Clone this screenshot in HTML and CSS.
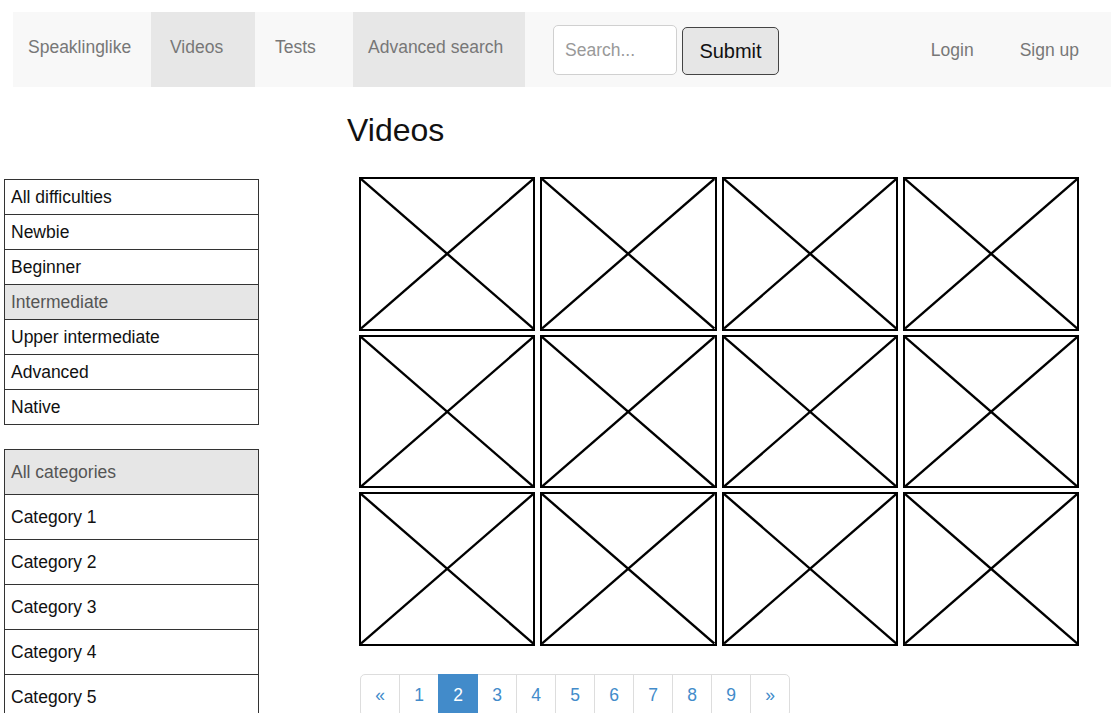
FILE: index.html
```html
<!DOCTYPE html>
<html lang="en">
<head>
<meta charset="utf-8">
<title>Videos - Speaklinglike</title>
<link rel="stylesheet" href="styles.css">
</head>
<body>
<nav class="navbar">
  <a class="nav-item brand" href="#">Speaklinglike</a>
  <a class="nav-item videos active" href="#">Videos</a>
  <a class="nav-item tests" href="#">Tests</a>
  <a class="nav-item advanced active" href="#">Advanced search</a>
  <form class="search-form">
    <input class="search-input" type="text" placeholder="Search...">
    <button class="search-btn" type="button">Submit</button>
  </form>
  <div class="nav-right">
    <a class="nav-item account" href="#">Login</a>
    <a class="nav-item account" href="#">Sign up</a>
  </div>
</nav>

<div class="layout">
  <aside class="sidebar">
    <ul class="filter-list difficulty">
      <li>All difficulties</li>
      <li>Newbie</li>
      <li>Beginner</li>
      <li class="selected">Intermediate</li>
      <li>Upper intermediate</li>
      <li>Advanced</li>
      <li>Native</li>
    </ul>
    <ul class="filter-list categories">
      <li class="selected">All categories</li>
      <li>Category 1</li>
      <li>Category 2</li>
      <li>Category 3</li>
      <li>Category 4</li>
      <li>Category 5</li>
    </ul>
  </aside>

  <main class="main">
    <h1 class="page-title">Videos</h1>
    <div class="video-grid">
      <div class="thumb"><svg viewBox="0 0 100 100" preserveAspectRatio="none"><line x1="0" y1="0" x2="100" y2="100"/><line x1="100" y1="0" x2="0" y2="100"/></svg></div>
      <div class="thumb"><svg viewBox="0 0 100 100" preserveAspectRatio="none"><line x1="0" y1="0" x2="100" y2="100"/><line x1="100" y1="0" x2="0" y2="100"/></svg></div>
      <div class="thumb"><svg viewBox="0 0 100 100" preserveAspectRatio="none"><line x1="0" y1="0" x2="100" y2="100"/><line x1="100" y1="0" x2="0" y2="100"/></svg></div>
      <div class="thumb"><svg viewBox="0 0 100 100" preserveAspectRatio="none"><line x1="0" y1="0" x2="100" y2="100"/><line x1="100" y1="0" x2="0" y2="100"/></svg></div>
      <div class="thumb"><svg viewBox="0 0 100 100" preserveAspectRatio="none"><line x1="0" y1="0" x2="100" y2="100"/><line x1="100" y1="0" x2="0" y2="100"/></svg></div>
      <div class="thumb"><svg viewBox="0 0 100 100" preserveAspectRatio="none"><line x1="0" y1="0" x2="100" y2="100"/><line x1="100" y1="0" x2="0" y2="100"/></svg></div>
      <div class="thumb"><svg viewBox="0 0 100 100" preserveAspectRatio="none"><line x1="0" y1="0" x2="100" y2="100"/><line x1="100" y1="0" x2="0" y2="100"/></svg></div>
      <div class="thumb"><svg viewBox="0 0 100 100" preserveAspectRatio="none"><line x1="0" y1="0" x2="100" y2="100"/><line x1="100" y1="0" x2="0" y2="100"/></svg></div>
      <div class="thumb"><svg viewBox="0 0 100 100" preserveAspectRatio="none"><line x1="0" y1="0" x2="100" y2="100"/><line x1="100" y1="0" x2="0" y2="100"/></svg></div>
      <div class="thumb"><svg viewBox="0 0 100 100" preserveAspectRatio="none"><line x1="0" y1="0" x2="100" y2="100"/><line x1="100" y1="0" x2="0" y2="100"/></svg></div>
      <div class="thumb"><svg viewBox="0 0 100 100" preserveAspectRatio="none"><line x1="0" y1="0" x2="100" y2="100"/><line x1="100" y1="0" x2="0" y2="100"/></svg></div>
      <div class="thumb"><svg viewBox="0 0 100 100" preserveAspectRatio="none"><line x1="0" y1="0" x2="100" y2="100"/><line x1="100" y1="0" x2="0" y2="100"/></svg></div>
    </div>
    <ul class="pagination">
      <li><a href="#">&laquo;</a></li>
      <li><a href="#">1</a></li>
      <li class="current"><a href="#">2</a></li>
      <li><a href="#">3</a></li>
      <li><a href="#">4</a></li>
      <li><a href="#">5</a></li>
      <li><a href="#">6</a></li>
      <li><a href="#">7</a></li>
      <li><a href="#">8</a></li>
      <li><a href="#">9</a></li>
      <li><a href="#">&raquo;</a></li>
    </ul>
  </main>
</div>
</body>
</html>
```
FILE: styles.css
```css
* {
  box-sizing: border-box;
}

html, body {
  margin: 0;
  padding: 0;
  background: #fff;
  font-family: "Liberation Sans", Arial, sans-serif;
  font-size: 17.5px;
  color: #111;
  overflow: hidden;
}

a {
  text-decoration: none;
}

/* ---- top navigation bar ---- */
.navbar {
  display: flex;
  align-items: stretch;
  height: 75px;
  margin: 12px 0 0 13px;
  background: #f8f8f8;
}

.nav-item {
  display: flex;
  align-items: center;
  padding-bottom: 5px;
  color: #777;
  white-space: nowrap;
}

.nav-item.active {
  background: #e7e7e7;
}

.brand {
  width: 138px;
  padding-left: 15px;
}

.videos {
  width: 104px;
  padding-left: 19px;
}

.tests {
  width: 98px;
  padding-left: 20px;
}

.advanced {
  width: 172px;
  padding-left: 15px;
}

.search-form {
  display: flex;
  align-items: flex-end;
  gap: 5px;
  margin-left: 28px;
  padding-top: 13px;
  height: 63px;
}

.search-input {
  width: 124px;
  height: 50px;
  padding: 0 11px;
  border: 1px solid #d0d0d0;
  border-radius: 5px;
  background: #fff;
  font-family: inherit;
  font-size: 17.5px;
  color: #333;
}

.search-input::placeholder {
  color: #999;
}

.search-btn {
  width: 97px;
  height: 48px;
  padding: 0;
  border: 1px solid #444;
  border-radius: 5px;
  background: #e6e6e6;
  font-family: inherit;
  font-size: 20px;
  color: #111;
}

.nav-right {
  display: flex;
  margin-left: auto;
  margin-right: 9px;
}

.account {
  padding: 1px 23px 0;
}

/* ---- page body ---- */
.layout {
  display: flex;
  align-items: flex-start;
}

.sidebar {
  width: 255px;
  margin-left: 4px;
  padding-top: 92px;
  display: flex;
  flex-direction: column;
  gap: 24px;
}

.filter-list {
  list-style: none;
  margin: 0;
  padding: 0;
  border: 1px solid #333;
}

.filter-list li {
  display: flex;
  align-items: center;
  padding-left: 6px;
  color: #111;
}

.filter-list li + li {
  border-top: 1px solid #333;
}

.difficulty li {
  height: 34px;
}

.difficulty li + li {
  height: 35px;
}

.categories li {
  height: 44px;
}

.categories li + li {
  height: 45px;
}

.filter-list li.selected {
  background: #e6e6e6;
  color: #555;
}

.main {
  margin-left: 88px;
  flex: 1;
}

.page-title {
  margin: 26px 0 0 0;
  font-size: 32px;
  font-weight: normal;
  line-height: 1.1;
  color: #111;
}

.video-grid {
  display: grid;
  grid-template-columns: repeat(4, 176.3px);
  grid-auto-rows: 153.5px;
  gap: 4px 5px;
  margin: 29px 0 0 12px;
}

.thumb {
  border: 2px solid #000;
  background: #fff;
}

.thumb svg {
  display: block;
  width: 100%;
  height: 100%;
}

.thumb line {
  stroke: #000;
  stroke-width: 2.4;
  vector-effect: non-scaling-stroke;
}

/* ---- pagination ---- */
.pagination {
  display: flex;
  list-style: none;
  margin: 28px 0 0 13px;
  padding: 0;
}

.pagination li a {
  display: flex;
  align-items: center;
  justify-content: center;
  width: 40px;
  height: 43px;
  margin-left: -1px;
  border: 1px solid #ddd;
  background: #fff;
  color: #428bca;
  font-size: 17.5px;
}

.pagination li:first-child a {
  margin-left: 0;
  border-radius: 5px 0 0 5px;
}

.pagination li:last-child a {
  border-radius: 0 5px 5px 0;
}

.pagination li.current a {
  position: relative;
  background: #428bca;
  border-color: #428bca;
  color: #fff;
}
```
